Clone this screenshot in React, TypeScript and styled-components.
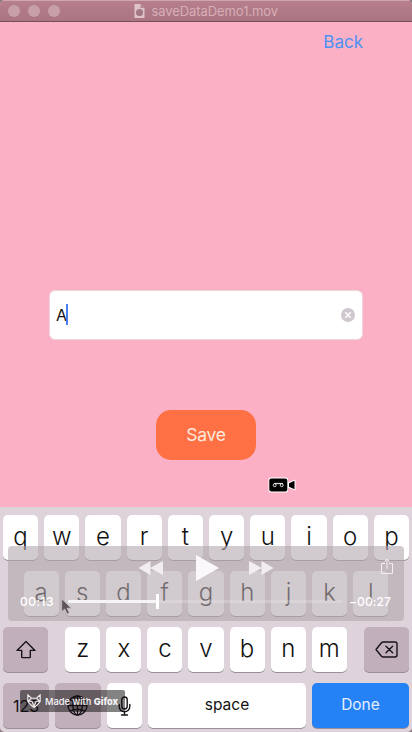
import React from "react";
import styled, { createGlobalStyle } from "styled-components";

const GlobalStyle = createGlobalStyle`
  * { box-sizing: border-box; }
  body { margin: 0; background: #85787f; font-family: Inter, "Liberation Sans", sans-serif; }
  svg { display: block; }
`;

const Window = styled.div`
  position: relative;
  width: 412px;
  height: 732px;
  display: flex;
  flex-direction: column;
  overflow: hidden;
  background: #fcb0c5;
  border-radius: 5px;
`;

const TitleBar = styled.header`
  position: relative;
  height: 22px;
  flex: none;
  display: flex;
  align-items: center;
  justify-content: center;
  gap: 7px;
  background: linear-gradient(#b77f8c, #aa7480);
  border-top: 1px solid #cfa5af;
  border-bottom: 1px solid #74505a;
  color: #d6aeb8;
  font-size: 13px;
  line-height: 20px;
`;

const Lights = styled.div`
  position: absolute;
  left: 8px;
  top: 4px;
  display: flex;
  gap: 8px;
`;

const Light = styled.i`
  width: 12px;
  height: 12px;
  border-radius: 50%;
  background: #c9a0a9;
`;

const FileTitle = styled.span`
  width: 127px;
  white-space: nowrap;
  letter-spacing: -0.08px;
`;

const Screen = styled.main`
  height: 485px;
  flex: none;
  display: flex;
  flex-direction: column;
  align-items: center;
  padding: 8px 49px 0;
`;

const BackButton = styled.button`
  align-self: flex-end;
  height: 24px;
  padding: 0;
  border: 0;
  background: none;
  color: #4a92f3;
  font: 400 17px/24px Inter, sans-serif;
  letter-spacing: 0;
`;

const Field = styled.div`
  width: 314px;
  height: 50px;
  margin-top: 236px;
  padding: 0 7px 0 6px;
  display: flex;
  align-items: center;
  background: #fff;
  border: 1px solid #ead7dc;
  border-radius: 6px;
  font-size: 16px;
  color: #111;
`;

const Caret = styled.i`
  width: 2px;
  height: 21px;
  margin: -2px auto 0 -1px;
  background: #4a7df0;
`;

const SaveButton = styled.button`
  width: 100px;
  height: 50px;
  margin-top: 70px;
  border: 0;
  border-radius: 15px;
  background: #ff7145;
  color: #fbe9df;
  font: 400 17.5px/50px Inter, sans-serif;
  letter-spacing: -0.3px;
  padding: 0;
`;

const CameraCursor = styled.div`
  align-self: flex-start;
  margin: 17px 0 0 219px;
`;

const Keyboard = styled.section`
  position: relative;
  height: 225px;
  flex: none;
  display: flex;
  flex-direction: column;
  gap: 11px;
  padding: 8px 3px 0;
  background: #ded3da;
`;

const KeyRow = styled.div<{ $inset?: number }>`
  display: flex;
  justify-content: space-between;
  padding: 0 ${(p) => p.$inset ?? 0}px;
`;

const Letters = styled.div`
  display: flex;
  gap: 6px;
`;

type Tone = "light" | "shade" | "action";
const tones: Record<Tone, string> = { light: "#fff", shade: "#c1b0bb", action: "#2581f6" };

const Key = styled.div<{ $w?: number; $tone?: Tone; $size?: number; $lift?: number }>`
  width: ${(p) => p.$w ?? 35.1}px;
  height: 45px;
  flex: none;
  display: flex;
  align-items: center;
  justify-content: center;
  padding-bottom: ${(p) => p.$lift ?? 0}px;
  border-radius: 5px;
  background: ${(p) => tones[p.$tone ?? "light"]};
  box-shadow: 0 1px 0 #9a9097;
  color: ${(p) => (p.$tone === "action" ? "#e3eefe" : "#111")};
  font-size: ${(p) => p.$size ?? 24}px;
  font-weight: ${(p) => (p.$size ? 400 : 350)};
`;

const Player = styled.div`
  position: absolute;
  left: 8px;
  top: 39px;
  width: 396px;
  height: 75px;
  border-radius: 4px;
  background: rgba(178, 167, 174, 0.6);
  color: #fff;
`;

const Transport = styled.div`
  display: flex;
  align-items: center;
  height: 43px;
  padding-left: 130px;
`;

const PlayIcon = styled.div`
  margin: 0 30px 0 33px;
`;

const ShareIcon = styled.div`
  margin: 0 0 3px 107px;
`;

const Timeline = styled.div`
  display: flex;
  align-items: center;
  height: 24px;
  padding: 0 12px;
  font-size: 12px;
  font-weight: 500;
`;

const Time = styled.span<{ $w: number }>`
  width: ${(p) => p.$w}px;
  flex: none;
  white-space: nowrap;
  letter-spacing: ${(p) => (p.$w > 40 ? 0.1 : 0.45)}px;
`;

const Track = styled.div`
  width: 274px;
  margin: 0 7px 0 13px;
  display: flex;
  align-items: center;
`;

const Played = styled.i`
  width: 88px;
  height: 3px;
  background: #f6f4f6;
`;

const Thumb = styled.i`
  width: 3px;
  height: 15px;
  background: #fff;
`;

const Remaining = styled.i`
  flex: 1;
  height: 3px;
  background: rgba(255, 255, 255, 0.2);
`;

const Pointer = styled.div`
  position: absolute;
  left: 53px;
  top: 52px;
`;

const Badge = styled.div`
  position: absolute;
  left: 20px;
  top: 183px;
  width: 105px;
  height: 22px;
  display: flex;
  align-items: center;
  gap: 4px;
  padding-left: 7px;
  border-radius: 2px;
  background: rgba(10, 8, 10, 0.5);
  color: #f8f5f7;
  font-size: 9.3px;
  font-weight: 500;
  white-space: nowrap;
`;

const BadgeText = styled.span`
  letter-spacing: 0;
  b { font-weight: 800; }
`;

const Skip = ({ forward = false }: { forward?: boolean }) => (
  <svg width="25" height="16" viewBox="0 0 25 16" fill="#f1edf0">
    {forward ? <path d="M0 1v14l13-7zM12.5 1v14l12-7z" /> : <path d="M25 1v14L12 8zM12.5 1v14L.5 8z" />}
  </svg>
);

const keys = (row: string) => row.split("").map((k) => <Key key={k} $lift={3}>{k}</Key>);

export default function App() {
  return (
    <>
      <GlobalStyle />
      <Window>
        <TitleBar>
          <Lights><Light /><Light /><Light /></Lights>
          <svg width="11" height="14" viewBox="0 0 11 14">
            <path d="M.5 0h6l4 4v10H.5z" fill="#e0c3ca" />
            <path d="M6.5 0v4h4" fill="#b58994" />
            <circle cx="5.5" cy="8.5" r="3.5" fill="#9b7480" />
            <path d="M3 7h2M6 6l1 2M4 10l1-1m2 1 1-1" stroke="#b9939e" strokeWidth=".7" />
          </svg>
          <FileTitle>saveDataDemo1.mov</FileTitle>
        </TitleBar>
        <Screen>
          <BackButton>Back</BackButton>
          <Field>
            <span>A</span>
            <Caret />
            <svg width="14" height="14" viewBox="0 0 14 14">
              <circle cx="7" cy="7" r="7" fill="#cec8ce" />
              <path d="m4.3 4.3 5.4 5.4m0-5.4-5.4 5.4" stroke="#fff" strokeWidth="1.5" />
            </svg>
          </Field>
          <SaveButton>Save</SaveButton>
          <CameraCursor>
            <svg width="28" height="16" viewBox="0 0 28 16">
              <path d="M3 .5h15q2 0 2 2v2.700l7.500-2.700v11L20 10.800v2.700q0 2-2 2H3q-2.500 0-2.500-2.500V3Q.5.500 3 .5z" fill="#fff" />
              <rect x="1.300" y="1.400" width="18" height="13.200" rx="2" fill="#000" />
              <path d="m21 6.200 5.500-2.400v8.400L21 9.800z" fill="#000" />
              <path d="M6 6.500h9" stroke="#ddd" strokeWidth="1.200" />
              <circle cx="6.700" cy="8.200" r="1.500" fill="none" stroke="#ddd" />
              <circle cx="13.700" cy="8.200" r="1.500" fill="none" stroke="#ddd" />
            </svg>
          </CameraCursor>
        </Screen>
        <Keyboard>
          <KeyRow>{keys("qwertyuiop")}</KeyRow>
          <KeyRow $inset={20.5}>{keys("asdfghjkl")}</KeyRow>
          <KeyRow>
            <Key $w={45} $tone="shade">
              <svg width="20" height="19" viewBox="0 0 20 19" fill="none" stroke="#181318" strokeWidth="1.4" strokeLinejoin="round">
                <path d="M10 1.5 1 10.4h4.7v6.3q0 .9.9.9h6.8q.9 0 .9-.9v-6.3H19z" />
              </svg>
            </Key>
            <Letters>{keys("zxcvbnm")}</Letters>
            <Key $w={45} $tone="shade">
              <svg width="23" height="17" viewBox="0 0 23 17" fill="none" stroke="#181318" strokeWidth="1.4" strokeLinejoin="round">
                <path d="M8.2 1H20q2 0 2 2v11q0 2-2 2H8.2q-1 0-1.7-.8L1 8.5l5.5-6.7Q7.2 1 8.2 1z" />
                <path d="m11 5.200 6.600 6.600m0-6.600L11 11.800" strokeLinecap="round" />
              </svg>
            </Key>
          </KeyRow>
          <KeyRow>
            <Key $w={46} $tone="shade" $size={16}>123</Key>
            <Key $w={46} $tone="shade">
              <svg width="21" height="21" viewBox="0 0 21 21" fill="none" stroke="#181318" strokeWidth="1.3">
                <circle cx="10.5" cy="10.5" r="9.5" />
                <ellipse cx="10.5" cy="10.5" rx="4.7" ry="9.5" />
                <path d="M10.5 1v19M1 10.5h19M3 5q7.5 3.500 15 0M3 16q7.500-3.500 15 0" />
              </svg>
            </Key>
            <Key>
              <svg width="13" height="20" viewBox="0 0 13 20" fill="none" stroke="#181318" strokeWidth="1.4" strokeLinecap="round">
                <rect x="3.8" y="1" width="5.4" height="12" rx="2.7" />
                <path d="M1.2 8.500v2a5.300 5.300 0 0 0 10.600 0v-2M6.500 16v3M3.500 19h6" />
              </svg>
            </Key>
            <Key $w={158} $size={15.5} $lift={3}>space</Key>
            <Key $w={97} $size={15.5} $lift={3} $tone="action">Done</Key>
          </KeyRow>
          <Player>
            <Transport>
              <Skip />
              <PlayIcon>
                <svg width="23" height="26" viewBox="0 0 23 26" fill="#faf8fa"><path d="M0 0v26l23-13z" /></svg>
              </PlayIcon>
              <Skip forward />
              <ShareIcon>
                <svg width="12" height="16" viewBox="0 0 12 16" fill="none" stroke="#f2eef1">
                  <path d="M4 5.500H.5v10h11v-10H8M6 11V1M3.500 3.500 6 1l2.500 2.500" />
                </svg>
              </ShareIcon>
            </Transport>
            <Timeline>
              <Time $w={35}>00:13</Time>
              <Track><Played /><Thumb /><Remaining /></Track>
              <Time $w={43}>−00:27</Time>
            </Timeline>
            <Pointer>
              <svg width="11" height="17" viewBox="0 0 11 17">
                <path d="M.7.8v13l3-2.800 2.400 5.100 2.300-1-2.300-4.900h4.200z" fill="#5d555b" stroke="#c9c1c6" strokeWidth=".8" />
              </svg>
            </Pointer>
          </Player>
          <Badge>
            <svg width="14" height="14" viewBox="0 0 14 14" fill="none" stroke="#eee9ec" strokeWidth="1.1">
              <path d="m.8.8 3.700 3.400h5L13.200.8v6.700L10 11l-3 2.500L4 11 .8 7.500zM1 7l4 .5 2 5 2-5 4-.5M4.500 4.200 1.500 7m8-2.800 3 2.800" />
            </svg>
            <BadgeText>Made with <b>Gifox</b></BadgeText>
          </Badge>
        </Keyboard>
      </Window>
    </>
  );
}
